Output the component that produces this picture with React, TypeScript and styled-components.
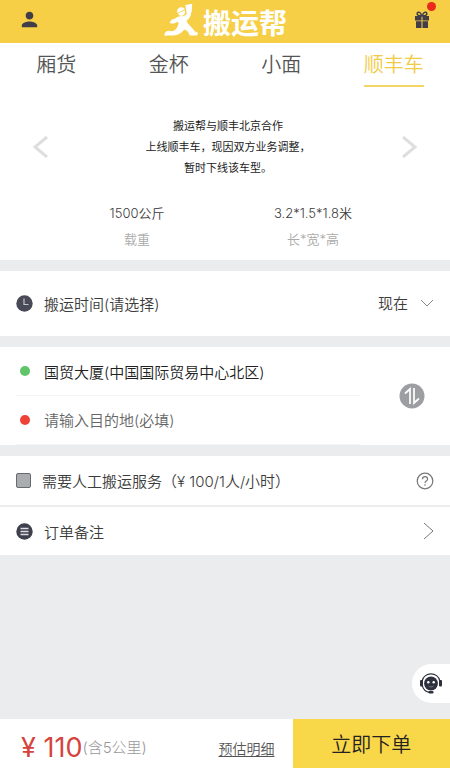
import React, { useState } from "react";
import styled, { createGlobalStyle } from "styled-components";
import { MdPerson } from "react-icons/md";

const GlobalStyle = createGlobalStyle`
  * { box-sizing: border-box; }
  body { margin: 0; background: #ebeced; }
  body, button, input, select {
    font-family: Inter, "Noto Sans CJK SC", sans-serif;
    font-weight: 350;
    font-variant-ligatures: no-contextual;
    color: #3c3c3c;
  }
  button, input, select {
    border: 0;
    padding: 0;
    margin: 0;
    background: none;
    outline: none;
  }
  button { cursor: pointer; }
  svg { display: block; flex: none; }
`;

const Page = styled.div`
  min-height: 100vh;
  display: flex;
  flex-direction: column;
`;

const Header = styled.header`
  display: flex;
  align-items: center;
  justify-content: space-between;
  height: 43px;
  padding: 0 17px 4px 18px;
  background: #f6cf46;
`;

const HeaderButton = styled.button`
  position: relative;
  display: grid;
  place-items: center;
  width: 22px;
  height: 24px;
  color: #413e4a;
`;

const Badge = styled.span`
  position: absolute;
  top: -6px;
  right: -3px;
  width: 9px;
  height: 9px;
  border-radius: 50%;
  background: #ea2a1c;
`;

const Brand = styled.h1`
  display: flex;
  align-items: center;
  gap: 5px;
  margin: 0;
  color: #fff;
  font-size: 28px;
  line-height: 32px;
  font-weight: 700;
  span { padding-top: 8px; }
`;

const Vehicle = styled.section`
  background: #fff;
  padding-bottom: 8px;
`;

const Tabs = styled.nav`
  display: grid;
  grid-template-columns: repeat(4, 1fr);
  justify-items: center;
`;

const Tab = styled.button<{ $active: boolean }>`
  height: 44px;
  padding-top: 2px;
  border-bottom: 2px solid ${(p) => (p.$active ? "#f4d565" : "transparent")};
  color: ${(p) => (p.$active ? "#f2cb45" : "#555")};
  font-size: 20px;
  line-height: 40px;
`;

const Carousel = styled.div`
  display: flex;
  align-items: center;
  justify-content: space-between;
  padding: 0 32px;
  margin-top: 28px;
`;

const Arrow = styled.button`
  color: #dedede;
`;

const Notice = styled.p`
  margin: 0;
  padding: 1px 0 0 6px;
  text-align: center;
  font-size: 11px;
  line-height: 21px;
  font-weight: 400;
  color: #222;
`;

const Specs = styled.dl`
  display: grid;
  grid-template-columns: 1fr 1fr;
  margin: 21px 49px 0;
  text-align: center;
`;

const Spec = styled.div`
  display: flex;
  flex-direction: column-reverse;
  font-size: 13px;
  line-height: 26px;
  dt { color: #aaa; }
  dd { margin: 0; }
`;

const Card = styled.section`
  margin-top: 11px;
  background: #fff;
`;

const Row = styled.div<{ $tall?: boolean }>`
  display: flex;
  align-items: center;
  gap: 11px;
  height: ${(p) => (p.$tall ? 65 : 49)}px;
  padding: 0 16px;
  font-size: 15px;
  & + & { border-top: 2px solid #ebeced; height: 50px; }
`;

const Label = styled.label`
  flex: 1;
  display: flex;
  align-items: center;
  gap: 11px;
`;

const TimeSelect = styled.select`
  appearance: none;
  font-size: 15px;
`;

const Addresses = styled(Card)`
  display: flex;
  align-items: center;
  justify-content: space-between;
  padding: 0 25px 0 16px;
`;

const AddressFields = styled.div`
  flex: 1;
  max-width: 344px;
`;

const AddressRow = styled.label`
  display: flex;
  align-items: center;
  gap: 14px;
  height: 49px;
  padding-left: 4px;
  border-bottom: 1px solid #f5f5f5;
`;

const Dot = styled.span<{ $color: string }>`
  width: 10px;
  height: 10px;
  border-radius: 50%;
  background: ${(p) => p.$color};
`;

const AddressInput = styled.input`
  flex: 1;
  min-width: 0;
  font-size: 15px;
  color: #222;
  &::placeholder { color: #666; opacity: 1; }
`;

const Checkbox = styled.input`
  appearance: none;
  width: 15px;
  height: 15px;
  border: 1px solid #666b70;
  border-radius: 2px;
  background: #a9adb0;
  &:checked { background: #f6cf46; }
`;

const RowButton = styled.button`
  flex: 1;
  display: flex;
  align-items: center;
  gap: 11px;
  height: 100%;
  text-align: left;
  font-size: 15px;
  span { flex: 1; }
`;

const Support = styled.button`
  position: fixed;
  right: 0;
  bottom: 65px;
  display: grid;
  place-items: center;
  width: 38px;
  height: 39px;
  border-radius: 20px 0 0 20px;
  background: #fff;
`;

const Footer = styled.footer`
  display: flex;
  align-items: stretch;
  height: 49px;
  margin-top: auto;
  background: #fff;
`;

const Summary = styled.div`
  flex: 1;
  display: flex;
  align-items: center;
  justify-content: space-between;
  padding: 8px 18px 0 21px;
`;

const Price = styled.div`
  display: flex;
  align-items: center;
  font-size: 15px;
  line-height: 32px;
  color: #999;
  span { font-weight: 300; }
  strong { font-size: 27px; font-weight: 400; color: #d4443c; }
`;

const Detail = styled.a`
  font-size: 14px;
  color: #555;
  text-decoration: underline;
  text-underline-offset: 2px;
`;

const Order = styled.button`
  width: 35%;
  background: #f8d748;
  color: #222;
  font-size: 20px;
`;

const Runner = () => (
  <svg width="34" height="33" viewBox="490 8 102 100" fill="#fff" aria-hidden="true">
    <path d="M554 14l21-4-2 27-15 1z" />
    <path d="M529 34c0-9 7-14 14-13 6 0 9 3 10 7l-23 10z" />
    <path d="M532 39l21-8c2 8-3 16-11 16-5 0-9-3-10-8z" />
    <path stroke="#fff" strokeWidth="3" d="M560 38l10-1c0 12-6 19-13 24 1 6 3 9 8 14l17 19c3 3 6 4 9 5l-2 6h-21c-2-9-7-14-17-18-8 11-19 17-32 18-9 1-17-1-27 1l2-8c6-5 10-5 16-3 15 0 22-12 25-25l-3-7-14 6-10-1c3-8 8-10 14-11 7-5 13-8 21-8 9 0 16-3 18-14z" />
  </svg>
);

const Gift = () => (
  <svg width="14" height="17" viewBox="0 0 14 17" aria-hidden="true">
    <path d="M6.6 5C3 5 1.700 3.500 2.200 2.200 3 .2 6 1.200 6.600 5zM7.400 5c3.600 0 4.900-1.500 4.400-2.800C11 .2 8 1.200 7.400 5z" fill="none" stroke="currentColor" strokeWidth="1.500" />
    <path d="M0 5h6.500v4.500H0zM7.500 5H14v4.500H7.500zM1 10.300h5.500V17H1zM7.500 10.300H13V17H7.500z" fill="currentColor" />
  </svg>
);

const Chevron = ({ points, width, height, stroke, color }: { points: string; width: number; height: number; stroke: number; color: string }) => (
  <svg width={width} height={height} viewBox={`0 0 ${width} ${height}`} fill="none" stroke={color} strokeWidth={stroke} aria-hidden="true">
    <polyline points={points} />
  </svg>
);

const Clock = () => (
  <svg width="17" height="17" viewBox="0 0 17 17" aria-hidden="true">
    <circle cx="8.500" cy="8.500" r="8.200" fill="#484b57" />
    <path d="M8 3.500v6h4.500" fill="none" stroke="#c3c5ca" strokeWidth="1.200" />
  </svg>
);

const Note = () => (
  <svg width="17" height="17" viewBox="0 0 17 17" aria-hidden="true">
    <circle cx="8.500" cy="8.500" r="8.200" fill="#3e414b" />
    <path d="M4.500 5.500h8M4.500 8.500h8M4.500 11.500h8" stroke="#dcdde0" strokeWidth="1.400" />
  </svg>
);

const Swap = () => (
  <svg width="26" height="26" viewBox="0 0 26 26" aria-hidden="true">
    <circle cx="13" cy="13" r="12.500" fill="#9d9ea1" />
    <path d="M6 10.500L11 6v15M15 5v15l5-4.500" fill="none" stroke="#fff" strokeWidth="1.700" />
  </svg>
);

const Question = () => (
  <svg width="18" height="18" viewBox="0 0 18 18" fill="none" stroke="#777" aria-hidden="true">
    <circle cx="9" cy="9" r="7.800" strokeWidth="1.200" />
    <path d="M6.500 7.200C6.500 3.700 11.600 3.900 11.600 7c0 2-2.600 2-2.600 4" strokeWidth="1.200" />
    <circle cx="9" cy="13" r=".8" fill="#777" stroke="none" />
  </svg>
);

const Headset = () => (
  <svg width="24" height="22" viewBox="0 0 24 22" aria-hidden="true">
    <circle cx="12" cy="10.500" r="6.900" fill="#2f303e" />
    <path d="M3.200 8C5-1.400 19-1.400 20.800 8M3.200 12c.8 4.700 4 7 8 7.500" fill="none" stroke="#2f303e" strokeWidth="1.300" />
    <rect x="1" y="7" width="3" height="6.500" rx="1" fill="#2f303e" />
    <rect x="20" y="7" width="3" height="6.500" rx="1" fill="#2f303e" />
    <rect x="9.500" y="18" width="5" height="2.500" rx="1.200" fill="#2f303e" />
    <circle cx="9.300" cy="9.200" r="1.200" fill="#fff" />
    <circle cx="14.700" cy="9.200" r="1.200" fill="#fff" />
    <path d="M9.500 13c1.500 1.300 3.500 1.300 5 0" fill="none" stroke="#888996" strokeWidth=".8" />
  </svg>
);

const vehicles = ["厢货", "金杯", "小面", "顺丰车"];

export default function App() {
  const [vehicle, setVehicle] = useState("顺丰车");
  const [from, setFrom] = useState("国贸大厦(中国国际贸易中心北区)");
  const [to, setTo] = useState("");

  return (
    <Page>
      <GlobalStyle />
      <Header>
        <HeaderButton aria-label="我的">
          <MdPerson size={23} />
        </HeaderButton>
        <Brand>
          <Runner />
          <span>搬运帮</span>
        </Brand>
        <HeaderButton aria-label="礼物">
          <Gift />
          <Badge />
        </HeaderButton>
      </Header>

      <Vehicle>
        <Tabs>
          {vehicles.map((name) => (
            <Tab key={name} $active={name === vehicle} onClick={() => setVehicle(name)}>
              {name}
            </Tab>
          ))}
        </Tabs>
        <Carousel>
          <Arrow aria-label="上一个">
            <Chevron points="15,1 3,11 15,21" width={17} height={22} stroke={3} color="currentColor" />
          </Arrow>
          <Notice>
            搬运帮与顺丰北京合作
            <br />
            上线顺丰车，现因双方业务调整，
            <br />
            暂时下线该车型。
          </Notice>
          <Arrow aria-label="下一个">
            <Chevron points="2,1 14,11 2,21" width={17} height={22} stroke={3} color="currentColor" />
          </Arrow>
        </Carousel>
        <Specs>
          <Spec>
            <dt>载重</dt>
            <dd>1500公斤</dd>
          </Spec>
          <Spec>
            <dt>长*宽*高</dt>
            <dd>3.2*1.5*1.8米</dd>
          </Spec>
        </Specs>
      </Vehicle>

      <Card>
        <Row $tall>
          <Label htmlFor="time">
            <Clock />
            搬运时间(请选择)
          </Label>
          <TimeSelect id="time" defaultValue="now">
            <option value="now">现在</option>
          </TimeSelect>
          <Chevron points="1,1 7,7 13,1" width={14} height={9} stroke={1} color="#888" />
        </Row>
      </Card>

      <Addresses>
        <AddressFields>
          <AddressRow>
            <Dot $color="#5fc568" />
            <AddressInput aria-label="出发地" value={from} onChange={(e) => setFrom(e.target.value)} />
          </AddressRow>
          <AddressRow>
            <Dot $color="#ee4238" />
            <AddressInput aria-label="目的地" placeholder="请输入目的地(必填)" value={to} onChange={(e) => setTo(e.target.value)} />
          </AddressRow>
        </AddressFields>
        <button
          aria-label="交换地址"
          onClick={() => {
            setFrom(to);
            setTo(from);
          }}
        >
          <Swap />
        </button>
      </Addresses>

      <Card>
        <Row>
          <Label>
            <Checkbox type="checkbox" />
            需要人工搬运服务（¥ 100/1人/小时）
          </Label>
          <button aria-label="帮助">
            <Question />
          </button>
        </Row>
        <Row>
          <RowButton>
            <Note />
            <span>订单备注</span>
            <Chevron points="1,1 10,9 1,17" width={11} height={18} stroke={1} color="#777" />
          </RowButton>
        </Row>
      </Card>

      <Support aria-label="客服">
        <Headset />
      </Support>

      <Footer>
        <Summary>
          <Price>
            <strong>¥ 110</strong>
            <span>(含5公里)</span>
          </Price>
          <Detail href="#detail">预估明细</Detail>
        </Summary>
        <Order>立即下单</Order>
      </Footer>
    </Page>
  );
}
